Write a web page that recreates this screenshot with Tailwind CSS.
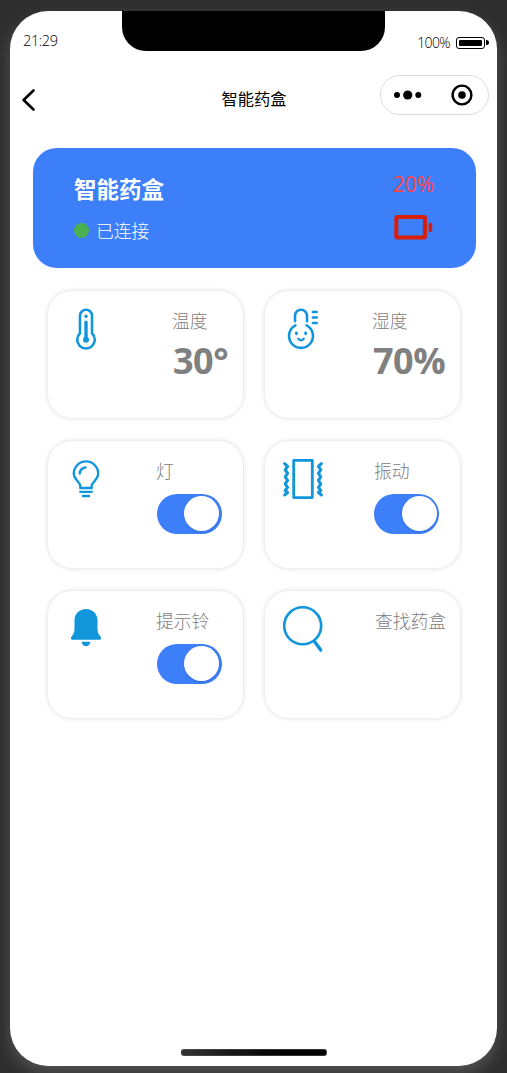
<!DOCTYPE html>
<html lang="zh-CN">

<head>
    <meta charset="UTF-8">
    <meta name="viewport" content="width=device-width, initial-scale=1.0">
    <title>智能药盒</title>
    <script src="https://cdn.jsdelivr.net/npm/@tailwindcss/browser@4"></script>
</head>

<body class="bg-[#2e2e2e] h-[1073px] overflow-hidden pt-[11px] pl-[10px] font-['Open_Sans','Noto_Sans_CJK_SC',sans-serif]">
    <div class="relative flex flex-col w-[487px] h-[1055px] bg-white rounded-[38px] shadow-[0_7px_16px_rgba(255,255,255,0.18)]">
        <!-- Notch -->
        <div class="absolute top-0 left-[112px] w-[263px] h-10 bg-black rounded-b-[24px]"></div>

        <!-- Status bar -->
        <div class="flex items-center justify-between h-[60px] pl-[13px] pr-2">
            <span class="text-[14.5px] tracking-[-0.4px] font-light text-black">21:29</span>
            <div class="flex items-center gap-[6px] pt-[3px]">
                <span class="text-[14px] tracking-[-0.6px] font-light text-black">100%</span>
                <div class="flex items-center gap-px">
                    <div class="w-[29px] h-3 p-[2px] border border-black rounded-[3px]">
                        <div class="h-full bg-black rounded-[1px]"></div>
                    </div>
                    <div class="w-[3px] h-[5px] bg-black rounded-r-full"></div>
                </div>
            </div>
        </div>

        <!-- Nav bar -->
        <div class="grid grid-cols-3 items-center h-[58px] pl-[9px] pr-2">
            <svg class="w-[13px] h-[22px] ml-[3px] -mt-px" fill="none" stroke="black" viewBox="0 0 13 22">
                <path stroke-linecap="round" stroke-linejoin="round" stroke-width="2.6" d="M11.500 1.500L1.600 11l9.900 9.500"></path>
            </svg>
            <h1 class="-mt-px text-center text-[16.3px] text-black">智能药盒</h1>
            <div class="justify-self-end flex items-center justify-between w-[109px] h-10 mb-[10px] pl-[13px] pr-[15px] border border-[#dcdcdc] rounded-full">
                <svg class="w-[28px] h-[10px]" viewBox="0 0 28 10">
                    <circle cx="3" cy="5" r="3"></circle>
                    <circle cx="13.7" cy="5" r="4.6"></circle>
                    <circle cx="24.3" cy="5" r="3"></circle>
                </svg>
                <svg class="w-[22px] h-[22px]" viewBox="0 0 22 22">
                    <circle cx="11" cy="11" r="9.4" fill="none" stroke="black" stroke-width="2.4"></circle>
                    <circle cx="11" cy="11" r="3.8"></circle>
                </svg>
            </div>
        </div>

        <!-- Device summary -->
        <div class="flex justify-between h-[120px] mt-[19px] ml-[23px] w-[443px] px-[41px] bg-[#3d7ff9] rounded-[24px]">
            <div class="pt-[26px]">
                <h2 class="text-[22.5px] leading-8 font-bold text-white">智能药盒</h2>
                <div class="flex items-center gap-2 mt-3">
                    <div class="w-[15px] h-[15px] bg-[#4caf50] rounded-full"></div>
                    <span class="-ml-px pt-px text-[17.8px] leading-6 font-light text-white">已连接</span>
                </div>
            </div>
            <div class="pt-[22px] w-[42px]">
                <p class="text-[21px] leading-7 text-[#ff4444]">20%</p>
                <svg class="w-10 h-[26px] mt-4" viewBox="0 0 40 26">
                    <rect x="3.3" y="3" width="28.6" height="20.6" rx="1" fill="none" stroke="#d81e06" stroke-width="4"></rect>
                    <rect x="35.600" y="8.700" width="3.600" height="9.400" rx="1.800" fill="#d81e06"></rect>
                </svg>
            </div>
        </div>

        <!-- Sensors and controls -->
        <div class="grid grid-cols-[195px_195px] gap-x-[22px] gap-y-[23px] mt-[23px] ml-[38px] text-[#808080]">
            <div class="flex h-[127px] pl-2 pt-[9px] rounded-[24px] shadow-[0_0_5px_rgba(0,0,0,0.16)]">
                <svg class="w-[60px] h-[60px] shrink-0" fill="none" stroke="#1296db" viewBox="0 0 60 60">
                    <path stroke-width="2.6" d="M24 33.3V15.7a6 6 0 0 1 12 0v17.6a8.800 8.800 0 1 1-12 0z"></path>
                    <path stroke-width="3.4" stroke-linecap="round" d="M30 22.2V39"></path>
                    <circle cx="30" cy="16.3" r="1.7" fill="#1296db" stroke="none"></circle>
                    <circle cx="30" cy="39.7" r="3" fill="#1296db" stroke="none"></circle>
                </svg>
                <div class="ml-14 pt-[9px]">
                    <p class="text-[17.8px] leading-6 font-light">温度</p>
                    <p class="mt-[5px] ml-px text-[36px] leading-[46px] tracking-[-0.5px] font-bold">30°</p>
                </div>
            </div>

            <div class="flex h-[127px] pl-2 pt-[9px] rounded-[24px] shadow-[0_0_5px_rgba(0,0,0,0.16)]">
                <svg class="w-[60px] h-[60px] shrink-0" fill="none" stroke="#1296db" stroke-linecap="round" viewBox="0 0 60 60">
                    <path stroke-width="2.6" d="M22 21.300v-5.600a6 6 0 0 1 12 0v5.600"></path>
                    <path stroke-width="2.6" d="M22.400 25.300a12 12 0 1 0 11.200 0"></path>
                    <path stroke-width="2.4" d="M39.800 12h4M39.800 17.500h4M39.800 23h4"></path>
                    <path stroke-width="2.8" d="M23.400 32.800v1M32.600 32.800v1"></path>
                    <path stroke-width="2.4" d="M25.300 38.800q2.700 3.200 5.400 0"></path>
                </svg>
                <div class="ml-10 pt-[9px]">
                    <p class="-ml-px text-[17.8px] leading-6 font-light">湿度</p>
                    <p class="mt-[5px] text-[36px] leading-[46px] tracking-[-0.5px] font-bold">70%</p>
                </div>
            </div>

            <div class="flex h-[127px] pl-2 pt-[9px] rounded-[24px] shadow-[0_0_5px_rgba(0,0,0,0.16)]">
                <svg class="w-[60px] h-[60px] shrink-0" fill="none" stroke="#1296db" viewBox="0 0 60 60">
                    <path stroke-width="2.4" d="M24.300 37.500v-1.800c0-3.400-6.500-6-6.500-12.100a12.200 12.200 0 0 1 24.400 0c0 6.100-6.500 8.700-6.500 12.100v1.800"></path>
                    <path stroke-width="2.4" stroke-linecap="round" d="M23.700 23.500a6.800 6.800 0 0 1 5.800-6"></path>
                    <path stroke-width="2.4" d="M23.300 38h13.400M23.300 41.900h13.400M26 46h8"></path>
                </svg>
                <div class="ml-10 pt-[9px]">
                    <p class="text-[17.8px] leading-6 font-light">灯</p>
                    <div class="flex items-center justify-end w-[65px] h-10 mt-[11px] ml-px pr-[3px] pb-px bg-[#3d7ff9] rounded-full">
                        <div class="w-[35px] h-[35px] bg-white rounded-full shadow-[0_1px_3px_rgba(0,0,0,0.12)]"></div>
                    </div>
                </div>
            </div>

            <div class="flex h-[127px] pl-2 pt-[9px] rounded-[24px] shadow-[0_0_5px_rgba(0,0,0,0.16)]">
                <svg class="w-[60px] h-[60px] shrink-0" fill="none" stroke="#1296db" stroke-linecap="round" stroke-linejoin="round" viewBox="0 0 60 60">
                    <rect x="20.7" y="10.4" width="18.6" height="37.2" stroke-width="2.8"></rect>
                    <path stroke-width="3" d="M11.600 13.600l3 2.700-2.400 3.500 2.400 3.500-2.400 3.500 2.400 3.500-2.400 3.500 2.400 3.500-2.400 3.200 2.400 2-3 2.500"></path>
                    <path stroke-width="3" d="M48.400 13.600l-3 2.700 2.400 3.500-2.400 3.500 2.400 3.500-2.400 3.500 2.400 3.500-2.400 3.500 2.400 3.200-2.400 2 3 2.500"></path>
                </svg>
                <div class="ml-[41px] pt-[9px]">
                    <p class="text-[17.8px] leading-6 font-light">振动</p>
                    <div class="flex items-center justify-end w-[65px] h-10 mt-[11px] pr-[2px] pb-px bg-[#3d7ff9] rounded-full">
                        <div class="w-[35px] h-[35px] bg-white rounded-full shadow-[0_1px_3px_rgba(0,0,0,0.12)]"></div>
                    </div>
                </div>
            </div>

            <div class="flex h-[127px] pl-2 pt-[9px] rounded-[24px] shadow-[0_0_5px_rgba(0,0,0,0.16)]">
                <svg class="w-[60px] h-[60px] shrink-0" fill="#1296db" viewBox="0 0 60 60">
                    <path d="M30 9c-6.800 0-11.500 5-11.500 11.300v8.200c0 3.400-.8 5.200-2.600 7.600-1.700 2.200-1 3.700.8 3.700h26.600c1.800 0 2.500-1.500.8-3.700-1.800-2.400-2.600-4.200-2.600-7.600v-8.200C41.500 14 36.800 9 30 9z"></path>
                    <path d="M26.600 41.800h6.800c1 0 1.200.8.6 1.800-.9 1.600-2.300 2.700-4 2.700s-3.100-1.100-4-2.700c-.6-1-.4-1.800.6-1.800z"></path>
                </svg>
                <div class="ml-10 pt-[9px]">
                    <p class="text-[17.8px] leading-6 font-light">提示铃</p>
                    <div class="flex items-center justify-end w-[65px] h-10 mt-[11px] ml-px pr-[3px] pb-px bg-[#3d7ff9] rounded-full">
                        <div class="w-[35px] h-[35px] bg-white rounded-full shadow-[0_1px_3px_rgba(0,0,0,0.12)]"></div>
                    </div>
                </div>
            </div>

            <div class="flex h-[127px] pl-2 pt-[9px] rounded-[24px] shadow-[0_0_5px_rgba(0,0,0,0.16)]">
                <svg class="w-[60px] h-[60px] shrink-0" fill="none" stroke="#1296db" stroke-linecap="round" viewBox="0 0 60 60">
                    <circle cx="29.7" cy="25.8" r="18.5" stroke-width="2.6"></circle>
                    <path stroke-width="3.4" d="M41.300 41.200l6.400 8.900"></path>
                </svg>
                <div class="ml-[42px] pt-[9px]">
                    <p class="text-[17.8px] leading-6 font-light">查找药盒</p>
                </div>
            </div>
        </div>

        <!-- Home indicator -->
        <div class="mt-auto mb-[10px] ml-[171px] w-[146px] h-[7px] rounded-[3px] bg-linear-to-r from-[#333333] to-black border border-[#555555]/60"></div>
    </div>
</body>

</html>
